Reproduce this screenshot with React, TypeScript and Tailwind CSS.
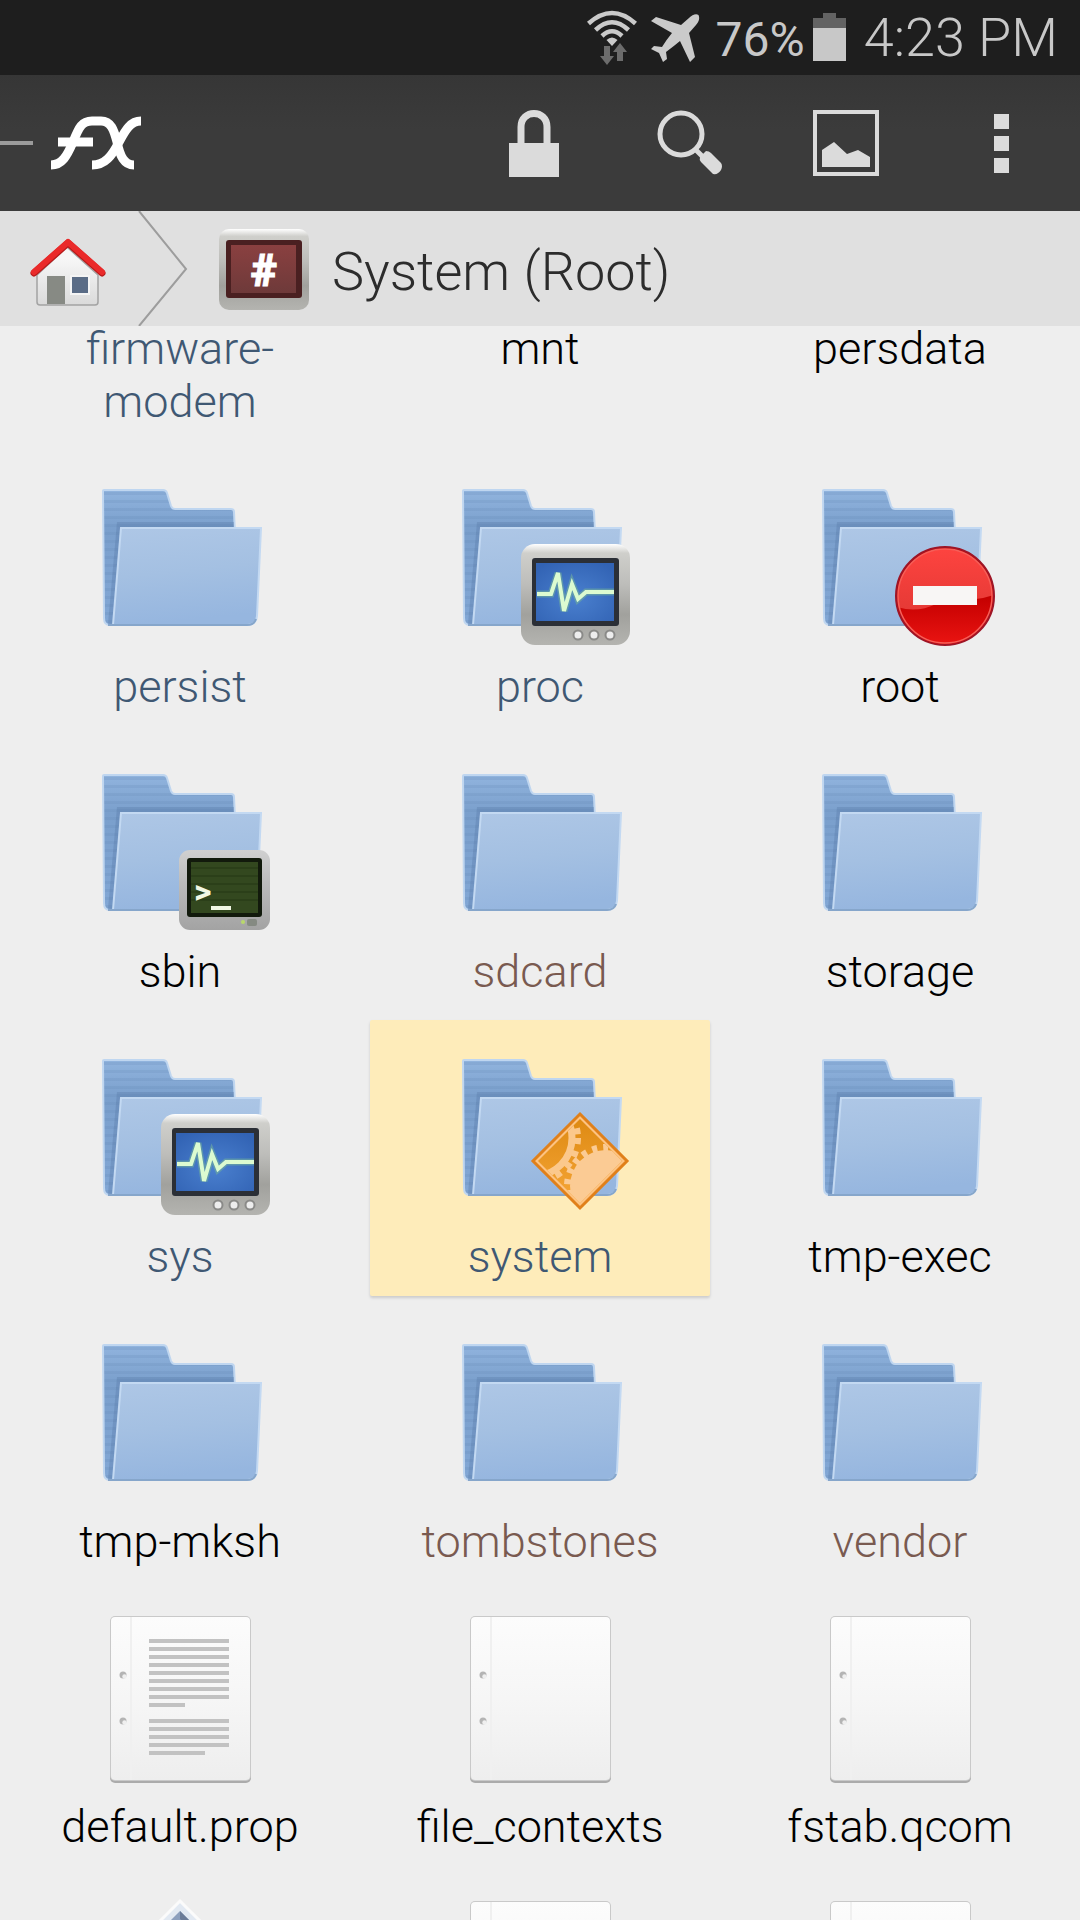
import type { ReactNode } from "react";

type IconKind = "folder" | "monitor" | "denied" | "terminal" | "gears" | "text" | "file" | "diamond";
type Tone = "link" | "plain" | "symlink";

type Entry = {
  icon: IconKind;
  name?: string;
  tone?: Tone;
  selected?: boolean;
};

const ENTRIES: Entry[] = [
  { icon: "folder", name: "firmware-modem", tone: "link" },
  { icon: "folder", name: "mnt" },
  { icon: "folder", name: "persdata" },
  { icon: "folder", name: "persist", tone: "link" },
  { icon: "monitor", name: "proc", tone: "link" },
  { icon: "denied", name: "root" },
  { icon: "terminal", name: "sbin" },
  { icon: "folder", name: "sdcard", tone: "symlink" },
  { icon: "folder", name: "storage" },
  { icon: "monitor", name: "sys", tone: "link" },
  { icon: "gears", name: "system", tone: "link", selected: true },
  { icon: "folder", name: "tmp-exec" },
  { icon: "folder", name: "tmp-mksh" },
  { icon: "folder", name: "tombstones", tone: "symlink" },
  { icon: "folder", name: "vendor", tone: "symlink" },
  { icon: "text", name: "default.prop" },
  { icon: "file", name: "file_contexts" },
  { icon: "file", name: "fstab.qcom" },
  { icon: "diamond" },
  { icon: "file" },
  { icon: "file" },
];

const TONES: Record<Tone, string> = {
  plain: "text-black",
  link: "text-[#3f5873]",
  symlink: "text-[#795a50]",
};

/* Gradients and clips shared by every icon on the page */
function IconDefs() {
  return (
    <svg className="absolute size-0" aria-hidden="true">
      <defs>
        <linearGradient id="folderBack" x1="0" y1="0" x2="0" y2="1">
          <stop offset="0" stopColor="#91b4de" />
          <stop offset="0.28" stopColor="#7a9fcc" />
          <stop offset="1" stopColor="#82a7d5" />
        </linearGradient>
        <linearGradient id="folderFront" x1="0" y1="0" x2="0.15" y2="1">
          <stop offset="0" stopColor="#aec7e6" />
          <stop offset="0.5" stopColor="#a4c0e2" />
          <stop offset="1" stopColor="#96b6df" />
        </linearGradient>
        <pattern id="stripes" width="8" height="8" patternUnits="userSpaceOnUse">
          <rect y="4" width="8" height="3" fill="#6488b8" opacity="0.22" />
        </pattern>
        <linearGradient id="bezel" x1="0" y1="0" x2="0" y2="1">
          <stop offset="0" stopColor="#ffffff" />
          <stop offset="0.09" stopColor="#cfcfcb" />
          <stop offset="0.4" stopColor="#bdbdba" />
          <stop offset="0.7" stopColor="#a1a19d" />
          <stop offset="1" stopColor="#b4b4b0" />
        </linearGradient>
        <linearGradient id="bezelGray" x1="0" y1="0" x2="0" y2="1">
          <stop offset="0" stopColor="#d0d0d0" />
          <stop offset="0.4" stopColor="#bcbcbc" />
          <stop offset="1" stopColor="#a3a3a3" />
        </linearGradient>
        <radialGradient id="scope" cx="0.5" cy="0.6" r="0.7">
          <stop offset="0" stopColor="#4a80cf" />
          <stop offset="1" stopColor="#3263b4" />
        </radialGradient>
        <linearGradient id="redTop" x1="0" y1="0" x2="0" y2="1">
          <stop offset="0" stopColor="#ff4440" />
          <stop offset="1" stopColor="#e63a36" />
        </linearGradient>
        <linearGradient id="redLow" x1="0" y1="0" x2="0" y2="1">
          <stop offset="0.5" stopColor="#c40000" />
          <stop offset="1" stopColor="#ea1412" />
        </linearGradient>
        <linearGradient id="orange" x1="0" y1="0" x2="0" y2="1">
          <stop offset="0" stopColor="#dc8810" />
          <stop offset="1" stopColor="#f8a83a" />
        </linearGradient>
        <linearGradient id="paper" x1="0" y1="0" x2="0" y2="1">
          <stop offset="0" stopColor="#fcfcfc" />
          <stop offset="0.5" stopColor="#f6f6f6" />
          <stop offset="1" stopColor="#eeeeee" />
        </linearGradient>
        <linearGradient id="maroon" x1="0" y1="0" x2="0" y2="1">
          <stop offset="0" stopColor="#8a4040" />
          <stop offset="1" stopColor="#6e3a3a" />
        </linearGradient>
        <linearGradient id="wall" x1="0" y1="0" x2="0" y2="1">
          <stop offset="0.2" stopColor="#f7f7f7" />
          <stop offset="1" stopColor="#dadada" />
        </linearGradient>
        <clipPath id="diamondClip">
          <path d="M136 85 L178 127 L136 169 L94 127Z" />
        </clipPath>
        <clipPath id="deniedClip">
          <circle cx="141" cy="132" r="47" />
        </clipPath>
      </defs>
    </svg>
  );
}

const FOLDER_BACK =
  "M19 27 Q19 26 20 26 H79 Q82 26 83 29 L87 42 Q88 45 91 45 H147 Q150 45 150 48 L151 70 V161 H26 Q20 161 20 154Z";

function Folder() {
  return (
    <>
      <path d={FOLDER_BACK} fill="url(#folderBack)" />
      <path d={FOLDER_BACK} fill="url(#stripes)" />
      <path d={FOLDER_BACK} fill="none" stroke="#bfd6f0" strokeWidth="2" />
      <path d="M33 58 H150 V64 H36 L29 160 H24Z" fill="#50719e" opacity="0.28" />
      <path
        d="M37 64 H177 L173 152 Q172 161 163 161 H29Z"
        fill="url(#folderFront)"
        stroke="#c3d9f2"
        strokeWidth="2"
      />
      <path d="M24 161 H163 Q170 161 172 155" fill="none" stroke="#86a6cb" strokeWidth="2" />
    </>
  );
}

function MonitorBadge() {
  return (
    <>
      <rect x="77" y="80" width="109" height="101" rx="14" fill="url(#bezel)" />
      <rect x="88" y="94" width="87" height="68" rx="3" fill="#2b2f36" />
      <rect x="92" y="99" width="78" height="58" fill="url(#scope)" />
      <path
        d="M93 130 H107 L114 109 L120 147 L128 120 L134 135 L142 128 H170"
        fill="none"
        stroke="#6fae9c"
        strokeWidth="7"
        opacity="0.6"
      />
      <path
        d="M93 130 H107 L114 109 L120 147 L128 120 L134 135 L142 128 H170"
        fill="none"
        stroke="#dcfbd0"
        strokeWidth="4"
      />
      {[134, 150, 166].map((x) => (
        <circle key={x} cx={x} cy="171" r="4.5" fill="#ededed" stroke="#8a8a88" strokeWidth="2" />
      ))}
    </>
  );
}

function DeniedBadge() {
  return (
    <>
      <circle cx="141" cy="132" r="49" fill="url(#redLow)" stroke="#9e1526" strokeWidth="2" />
      <g clipPath="url(#deniedClip)">
        <path d="M90 80 H192 V130 Q182 134 172 135 Q150 137 132 140 Q112 150 90 142Z" fill="url(#redTop)" />
      </g>
      <circle cx="141" cy="132" r="47" fill="none" stroke="#f5605a" strokeWidth="1.5" />
      <rect x="109" y="122" width="64" height="19" fill="#f8f6f5" />
    </>
  );
}

function TerminalBadge() {
  return (
    <>
      <rect x="95" y="101" width="91" height="80" rx="11" fill="url(#bezelGray)" />
      <rect x="103" y="109" width="75" height="59" rx="3" fill="#121a0c" />
      <rect x="107" y="113" width="67" height="51" fill="#33481f" />
      <path d="M107 119H174M107 127H174M107 135H174M107 143H174M107 151H174" stroke="#2b3f19" strokeWidth="2" />
      <text x="110" y="154" fontSize="34" fontWeight="700" fontFamily="Roboto, sans-serif" fill="#f1f7e4">
        &gt;
      </text>
      <rect x="127" y="157" width="20" height="4" fill="#f1f7e4" />
      <circle cx="159" cy="173" r="2" fill="#b9d86a" />
      <rect x="163" y="170" width="10" height="7" rx="2" fill="#858a82" />
    </>
  );
}

function GearsBadge() {
  return (
    <>
      <path d="M136 80 L183 127 L136 174 L89 127Z" fill="#fdc382" stroke="#e0801a" strokeWidth="3" />
      <g clipPath="url(#diamondClip)">
        <rect x="88" y="78" width="96" height="98" fill="url(#orange)" />
        <circle cx="90" cy="104" r="38" fill="none" stroke="#fbc88c" strokeWidth="7" />
        <circle cx="90" cy="104" r="43" fill="none" stroke="#fbc88c" strokeWidth="8" strokeDasharray="6 7" />
        <circle cx="162" cy="152" r="36" fill="#fbcb94" />
        <circle cx="162" cy="152" r="38" fill="none" stroke="#fbcb94" strokeWidth="8" strokeDasharray="5 6" />
      </g>
    </>
  );
}

function Sheet({ lines }: { lines?: boolean }) {
  return (
    <>
      <rect x="26" y="14" width="141" height="165" rx="5" fill="#000000" opacity="0.28" />
      <rect x="26" y="12" width="141" height="165" rx="5" fill="#c9c9c9" />
      <rect x="27" y="13" width="139" height="163" rx="4" fill="url(#paper)" />
      <path d="M47 13V176" stroke="#f0f0f0" strokeWidth="2" />
      {[71, 117].map((y) => (
        <g key={y}>
          <circle cx="39" cy={y} r="3.5" fill="#b4b4b4" />
          <circle cx="40.5" cy={y + 1.5} r="2.2" fill="#efefef" />
        </g>
      ))}
      {lines && (
        <path
          d="M65 37H145M65 45H145M65 53H145M65 61H145M65 69H145M65 77H145M65 85H145M65 93H145M65 101H101M65 117H145M65 125H145M65 133H145M65 141H145M65 149H121"
          stroke="#c2c2c2"
          strokeWidth="4"
        />
      )}
    </>
  );
}

function Diamond() {
  return (
    <>
      <path d="M96 12 L178 94 L96 176 L14 94Z" fill="#e2e9f2" stroke="#fbfbfb" strokeWidth="3" />
      <path d="M96 22 L168 94 L96 166 L24 94Z" fill="#8c9fbd" />
      <path d="M96 22 L168 94 L158 94 L96 30Z" fill="#6b7c98" />
    </>
  );
}

function EntryIcon({ kind }: { kind: IconKind }) {
  const isFolder = ["folder", "monitor", "denied", "terminal", "gears"].includes(kind);
  return (
    <svg viewBox="0 0 192 192" className="size-48 shrink-0" aria-hidden="true">
      {isFolder && <Folder />}
      {kind === "monitor" && <MonitorBadge />}
      {kind === "denied" && <DeniedBadge />}
      {kind === "terminal" && <TerminalBadge />}
      {kind === "gears" && <GearsBadge />}
      {kind === "file" && <Sheet />}
      {kind === "text" && <Sheet lines />}
      {kind === "diamond" && <Diamond />}
    </svg>
  );
}

function EntryTile({ entry }: { entry: Entry }) {
  return (
    <button
      type="button"
      aria-pressed={entry.selected ?? false}
      className={`flex flex-col items-center rounded-xs px-4 pt-3.5 pb-[13px] ${
        entry.selected ? "bg-[#feecba] shadow-[0_2px_3px_rgba(0,0,0,0.15)]" : ""
      }`}
    >
      <EntryIcon kind={entry.icon} />
      <span className={`mt-1 min-h-[53px] text-[45px] leading-[53px] ${TONES[entry.tone ?? "plain"]}`}>
        {entry.name}
      </span>
    </button>
  );
}

function StatusBar() {
  return (
    <div className="flex h-[75px] items-center justify-end bg-[#1e1e1e] pr-[22px] text-[#c8c8c8]">
      <svg viewBox="0 0 52 60" className="mr-3 h-[60px] w-[52px]" aria-hidden="true">
        <g fill="none" stroke="#cacaca" strokeWidth="4.5">
          <path d="M2.5 15.5 Q26 -5.5 49.5 15.5" />
          <path d="M9.5 22 Q26 6.5 42.5 22" />
          <path d="M16 28 Q26 18.5 36 28" />
        </g>
        <path d="M20.5 32 Q26 27 31.5 32 L26 38Z" fill="#cacaca" />
        <path d="M18 38h6v10h4l-7 9-7-9h4zM31 53v-9h-4l7-9 7 9h-4v9z" fill="#6c6c6c" />
      </svg>
      <svg viewBox="0 0 50 50" className="size-[50px]" aria-hidden="true">
        <path
          d="M48.5 2 C46 0 42 2 39 5 L31 12 L6 4 L1 8 L22 20 Q17 26 12 34 L4 33 L1 36 L9 40 L13 49 L17 46 L16 39 Q24 33 30 28 L40 49 L45 44 L39 20 L46 12 C49 9 50 5 48.5 2Z"
          fill="#cacaca"
        />
      </svg>
      <span className="ml-4 pt-1 text-[48px] leading-[55px] font-normal">76%</span>
      <svg viewBox="0 0 33 48" className="mx-2 mb-0.5 h-12 w-[33px]" aria-hidden="true">
        <path d="M10 0h13v5h10v10H0V5h10z" fill="#636363" />
        <path d="M0 15h33v33H0z" fill="#c8c8c8" />
      </svg>
      <span className="ml-2.5 text-[54px] leading-[63px]">4:23 PM</span>
    </div>
  );
}

function ToolButton({ label, children }: { label: string; children: ReactNode }) {
  return (
    <button type="button" aria-label={label} className="flex h-full w-[156px] items-center justify-center">
      <svg viewBox="0 0 80 80" className="size-20 text-[#dbdbdb]" fill="none" stroke="currentColor">
        {children}
      </svg>
    </button>
  );
}

function Toolbar() {
  return (
    <header className="flex h-[136px] items-center bg-gradient-to-b from-[#363636] to-[#3b3b3b] to-40%">
      <button type="button" aria-label="Menu" className="flex h-full items-center">
        <span className="h-1 w-[33px] bg-[#9b9b9b]" />
        <svg viewBox="0 0 96 66" className="ml-[15px] h-[66px] w-24" fill="none" stroke="#ffffff" strokeWidth="9">
          <path d="M3 55 C14 55 19 46 25 32 C31 17 34 11 44 11 H53 C63 11 66 20 69 32 C72 46 76 55 86 55" />
          <path d="M93 11 C82 11 77 21 71 32 C64 46 57 55 44 55" />
          <path d="M10 32H45" />
        </svg>
      </button>
      <nav className="ml-auto flex h-full" aria-label="Actions">
        <ToolButton label="Lock">
          <path d="M27 42 V24 C27 6 53 6 53 24 V42" strokeWidth="7" />
          <path d="M15 40h50v34H15z" fill="currentColor" stroke="none" />
        </ToolButton>
        <ToolButton label="Search">
          <circle cx="31" cy="31" r="21" strokeWidth="5" />
          <path d="M45 46 L54 55" strokeWidth="5" />
          <path d="M50 54 L56 48 Q59 48 61 50 L71 60 Q73 63 71 67 Q68 72 63 71 L51 59 Q49 57 50 54Z" fill="currentColor" stroke="none" />
        </ToolButton>
        <ToolButton label="View">
          <rect x="9" y="9" width="62" height="62" strokeWidth="4" />
          <path d="M16 47 L28 39 L41 51 L52 47 L64 54 V64 H16Z" fill="currentColor" stroke="none" />
        </ToolButton>
        <ToolButton label="More options">
          <path d="M32 11h15v15H32zM32 33h15v15H32zM32 55h15v15H32z" fill="currentColor" stroke="none" />
        </ToolButton>
      </nav>
    </header>
  );
}

function Breadcrumb() {
  return (
    <nav className="flex h-[115px] items-center bg-[#e0e0e0]" aria-label="Location">
      <button type="button" aria-label="Home" className="flex h-full items-center pl-7">
        <svg viewBox="0 0 82 80" className="h-20 w-[82px]">
          <path d="M9 46 L39 18 L70 46 V73 Q70 76 67 76 H12 Q9 76 9 73Z" fill="url(#wall)" stroke="#a3a3a3" strokeWidth="1.5" />
          <rect x="19" y="47" width="18" height="28" fill="#878a84" />
          <rect x="42" y="46" width="20" height="20" fill="#f4f4f4" />
          <rect x="44" y="48" width="16" height="16" fill="#5a6c86" />
          <path d="M6 44 L40 14 L74 44" fill="none" stroke="#b81a1a" strokeWidth="7" strokeLinecap="round" strokeLinejoin="round" />
          <path d="M6 43 L40 13 L74 43" fill="none" stroke="#ea2a2a" strokeWidth="6" strokeLinecap="round" strokeLinejoin="round" />
        </svg>
      </button>
      <svg viewBox="0 0 50 115" className="ml-7 h-full w-[50px]" fill="none" stroke="#9d9d9d" strokeWidth="2">
        <path d="M1 0 L48 58 L1 115" />
      </svg>
      <svg viewBox="0 0 92 84" className="ml-[30px] h-[84px] w-[92px]" aria-hidden="true">
        <rect x="1" y="2" width="90" height="81" rx="10" fill="url(#bezel)" />
        <rect x="8" y="13" width="76" height="58" rx="3" fill="#4a2021" />
        <rect x="13" y="18" width="65" height="48" fill="url(#maroon)" />
        <text
          x="46"
          y="59"
          textAnchor="middle"
          fontSize="45"
          fontWeight="900"
          fontFamily="Roboto, sans-serif"
          fill="#ffffff"
          stroke="#ffffff"
          strokeWidth="1"
        >
          #
        </text>
      </svg>
      <h1 className="ml-[22px] pt-1.5 text-[54px] leading-[63px] text-[#2c2c2c]">System (Root)</h1>
    </nav>
  );
}

export default function App() {
  return (
    <div className="flex h-screen w-full flex-col overflow-hidden bg-[#eeeeee] font-['Roboto',sans-serif] font-light">
      <IconDefs />
      <StatusBar />
      <Toolbar />
      <Breadcrumb />
      <main className="min-h-0 flex-1 overflow-hidden">
        {/* The list sits part-way through a scroll, so its first row is cut off */}
        <div className="-mt-[214px] grid grid-cols-3 gap-x-5 gap-y-[9px] px-2.5">
          {ENTRIES.map((entry, i) => (
            <EntryTile key={i} entry={entry} />
          ))}
        </div>
      </main>
    </div>
  );
}
